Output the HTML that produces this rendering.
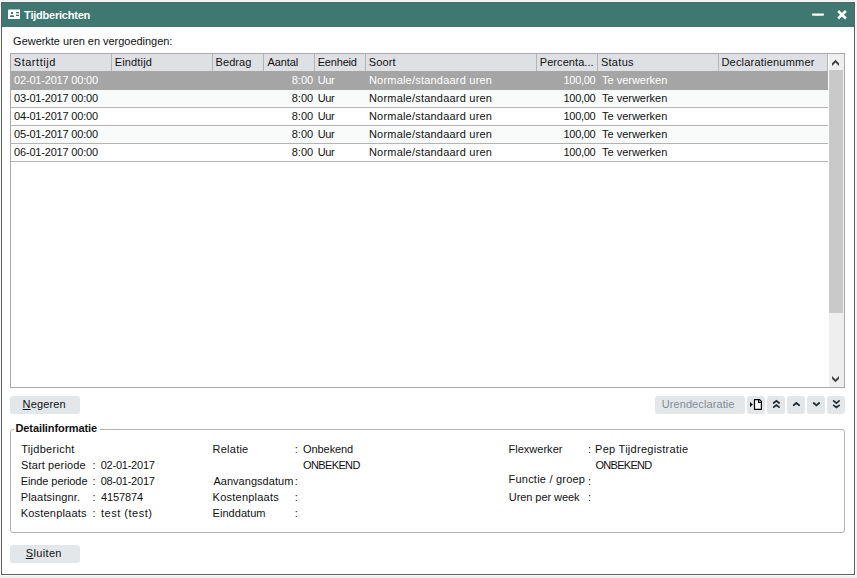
<!DOCTYPE html>
<html><head><meta charset="utf-8"><style>
html,body{margin:0;padding:0;}
body{width:857px;height:578px;background:#eef1f2;position:relative;overflow:hidden;font-family:"Liberation Sans", sans-serif;font-size:11px;color:#111;}
.r{position:absolute;}
.t{position:absolute;line-height:13px;white-space:nowrap;}
</style></head><body>
<div class="r" style="left:0px;top:1px;width:856px;height:575px;background:#f8fbfb;"></div>
<div class="r" style="left:1px;top:2px;width:854px;height:573px;background:#ffffff;box-sizing:border-box;border:1px solid #5e5e5e;"></div>
<div class="r" style="left:2px;top:3px;width:852px;height:24px;background:#3e7870;"></div>
<svg class="r" style="left:8px;top:9px" width="12" height="10" viewBox="0 0 12 10">
<path d="M0.6 0.6H12V10H0V1.2Z" fill="#fff"/>
<rect x="3" y="3" width="2" height="2" fill="#3e7870"/>
<path d="M2 8V6.9Q2 6.2 3 6.2H5Q6 6.2 6 6.9V8Z" fill="#3e7870"/>
<rect x="8" y="3" width="3" height="1" fill="#3e7870"/>
<rect x="8" y="6" width="3" height="1" fill="#3e7870"/>
<rect x="8" y="4" width="3" height="2" fill="#c5d7d4"/>
</svg>
<svg class="r" style="left:810px;top:10px" width="16" height="10" viewBox="0 0 16 10"><path d="M3 4.6H13" stroke="#fff" stroke-width="2.2" stroke-linecap="round"/></svg>
<svg class="r" style="left:837px;top:10px" width="10" height="10" viewBox="0 0 10 10">
<path d="M1.1 1L8.9 8.5M8.9 1L1.1 8.5" stroke="#fff" stroke-width="2.5" stroke-linecap="butt"/>
</svg>
<div class="r" style="left:10px;top:53px;width:835px;height:335px;background:#fff;box-sizing:border-box;border:1px solid #a9a9a9;"></div>
<div class="r" style="left:11px;top:54px;width:816px;height:17px;background:#dfe0e4;"></div>
<div class="r" style="left:111px;top:54px;width:1px;height:17px;background:#b3b4b7;"></div>
<div class="r" style="left:212px;top:54px;width:1px;height:17px;background:#b3b4b7;"></div>
<div class="r" style="left:263px;top:54px;width:1px;height:17px;background:#b3b4b7;"></div>
<div class="r" style="left:314px;top:54px;width:1px;height:17px;background:#b3b4b7;"></div>
<div class="r" style="left:365px;top:54px;width:1px;height:17px;background:#b3b4b7;"></div>
<div class="r" style="left:536px;top:54px;width:1px;height:17px;background:#b3b4b7;"></div>
<div class="r" style="left:597px;top:54px;width:1px;height:17px;background:#b3b4b7;"></div>
<div class="r" style="left:718px;top:54px;width:1px;height:17px;background:#b3b4b7;"></div>
<div class="r" style="left:827px;top:54px;width:1px;height:17px;background:#b3b4b7;"></div>
<div class="r" style="left:11px;top:71px;width:817px;height:19px;background:#a5a5a5;"></div>
<div class="r" style="left:11px;top:90px;width:817px;height:17px;background:#f9fbfb;"></div>
<div class="r" style="left:11px;top:107px;width:817px;height:1px;background:#b4b4b4;"></div>
<div class="r" style="left:11px;top:108px;width:817px;height:17px;background:#ffffff;"></div>
<div class="r" style="left:11px;top:125px;width:817px;height:1px;background:#b4b4b4;"></div>
<div class="r" style="left:11px;top:126px;width:817px;height:17px;background:#f9fbfb;"></div>
<div class="r" style="left:11px;top:143px;width:817px;height:1px;background:#b4b4b4;"></div>
<div class="r" style="left:11px;top:144px;width:817px;height:17px;background:#ffffff;"></div>
<div class="r" style="left:11px;top:161px;width:817px;height:1px;background:#b4b4b4;"></div>
<div class="r" style="left:829px;top:54px;width:15px;height:333px;background:#efefef;"></div>
<div class="r" style="left:829px;top:70px;width:14px;height:243px;background:#c9c9c9;"></div>
<svg class="r" style="left:829px;top:56px" width="14" height="14" viewBox="0 0 14 14">
<path d="M3 7.3L6.5 3.8L10 7.3V10L6.5 6.5L3 10Z" fill="#404040"/>
</svg>
<svg class="r" style="left:829px;top:371px" width="14" height="14" viewBox="0 0 14 14">
<path d="M3 5L6.5 8.5L10 5V7.7L6.5 11.2L3 7.7Z" fill="#404040"/>
</svg>
<div class="r" style="left:10px;top:396px;width:70px;height:18px;background:#e3e7ea;border-radius:3px;"></div>
<div class="r" style="left:655px;top:396px;width:90px;height:18px;background:#e3e7ea;border-radius:3px;"></div>
<div class="r" style="left:747px;top:396px;width:18px;height:18px;background:#e3e7ea;border-radius:3px;"></div>
<div class="r" style="left:767px;top:396px;width:18px;height:18px;background:#e3e7ea;border-radius:3px;"></div>
<div class="r" style="left:787px;top:396px;width:18px;height:18px;background:#e3e7ea;border-radius:3px;"></div>
<div class="r" style="left:807px;top:396px;width:18px;height:18px;background:#e3e7ea;border-radius:3px;"></div>
<div class="r" style="left:827px;top:396px;width:18px;height:18px;background:#e3e7ea;border-radius:3px;"></div>
<svg class="r" style="left:747px;top:396px" width="18" height="18" viewBox="0 0 18 18">
<path d="M3 6L5.9 8.5L3 11Z" fill="#000"/>
<path d="M7.5 3.6H12.6L14.4 5.4V13.4H7.5Z" fill="#fff" stroke="#000" stroke-width="1.2" stroke-linejoin="round"/>
<path d="M11.6 3.6V6.4H14.4" fill="none" stroke="#000" stroke-width="1.2"/>
</svg>
<svg class="r" style="left:767px;top:396px" width="18" height="18" viewBox="0 0 18 18">
<path d="M6.7 7L9.4 4.8L12.1 7M6.7 11.2L9.4 9L12.1 11.2" stroke="#1f2a30" stroke-width="1.7" stroke-linecap="round" fill="none"/>
</svg>
<svg class="r" style="left:787px;top:396px" width="18" height="18" viewBox="0 0 18 18">
<path d="M6.7 9.2L9.4 6.9L12.1 9.2" stroke="#1f2a30" stroke-width="1.8" stroke-linecap="round" fill="none"/>
</svg>
<svg class="r" style="left:807px;top:396px" width="18" height="18" viewBox="0 0 18 18">
<path d="M6.7 7L9.4 9.4L12.1 7" stroke="#1f2a30" stroke-width="1.8" stroke-linecap="round" fill="none"/>
</svg>
<svg class="r" style="left:827px;top:396px" width="18" height="18" viewBox="0 0 18 18">
<path d="M6.7 4.9L9.4 7.1L12.1 4.9M6.7 9.3L9.4 11.5L12.1 9.3" stroke="#1f2a30" stroke-width="1.7" stroke-linecap="round" fill="none"/>
</svg>
<div class="r" style="left:10px;top:429px;width:835px;height:104px;background:transparent;box-sizing:border-box;border:1px solid #b2b2b2;border-radius:3px;"></div>
<div class="r" style="left:14px;top:426px;width:86px;height:7px;background:#fff;"></div>
<div class="r" style="left:10px;top:545px;width:70px;height:18px;background:#e3e7ea;border-radius:3px;"></div>
<div class="t" style="left:24.08px;top:9px;letter-spacing:-0.223px;font-weight:bold;color:#fff;">Tijdberichten</div>
<div class="t" style="left:13.12px;top:35px;letter-spacing:-0.032px;">Gewerkte uren en vergoedingen:</div>
<div class="t" style="left:13.78px;top:56px;letter-spacing:0.531px;">Starttijd</div>
<div class="t" style="left:114.72px;top:56px;letter-spacing:0.154px;">Eindtijd</div>
<div class="t" style="left:215.62px;top:56px;letter-spacing:0.035px;">Bedrag</div>
<div class="t" style="left:267.38px;top:56px;letter-spacing:-0.065px;">Aantal</div>
<div class="t" style="left:317.73px;top:56px;letter-spacing:-0.191px;">Eenheid</div>
<div class="t" style="left:368.68px;top:56px;letter-spacing:0.149px;">Soort</div>
<div class="t" style="left:539.72px;top:56px;letter-spacing:0.075px;">Percenta...</div>
<div class="t" style="left:600.88px;top:56px;letter-spacing:0.3px;">Status</div>
<div class="t" style="left:721.42px;top:56px;letter-spacing:0.211px;">Declaratienummer</div>
<div class="t" style="left:14.12px;top:74px;letter-spacing:-0.195px;color:#fff;">02-01-2017 00:00</div>
<div class="t" style="left:291.73px;top:74px;letter-spacing:0.025px;color:#fff;">8:00</div>
<div class="t" style="left:317.68px;top:74px;letter-spacing:-0.337px;color:#fff;">Uur</div>
<div class="t" style="left:368.92px;top:74px;letter-spacing:0.211px;color:#fff;">Normale/standaard uren</div>
<div class="t" style="left:563.52px;top:74px;letter-spacing:-0.295px;color:#fff;">100,00</div>
<div class="t" style="left:602.02px;top:74px;letter-spacing:-0.014px;color:#fff;">Te verwerken</div>
<div class="t" style="left:14.12px;top:92px;letter-spacing:-0.195px;">03-01-2017 00:00</div>
<div class="t" style="left:291.73px;top:92px;letter-spacing:0.025px;">8:00</div>
<div class="t" style="left:317.68px;top:92px;letter-spacing:-0.337px;">Uur</div>
<div class="t" style="left:368.92px;top:92px;letter-spacing:0.211px;">Normale/standaard uren</div>
<div class="t" style="left:563.52px;top:92px;letter-spacing:-0.295px;">100,00</div>
<div class="t" style="left:602.02px;top:92px;letter-spacing:-0.014px;">Te verwerken</div>
<div class="t" style="left:14.12px;top:110px;letter-spacing:-0.195px;">04-01-2017 00:00</div>
<div class="t" style="left:291.73px;top:110px;letter-spacing:0.025px;">8:00</div>
<div class="t" style="left:317.68px;top:110px;letter-spacing:-0.337px;">Uur</div>
<div class="t" style="left:368.92px;top:110px;letter-spacing:0.211px;">Normale/standaard uren</div>
<div class="t" style="left:563.52px;top:110px;letter-spacing:-0.295px;">100,00</div>
<div class="t" style="left:602.02px;top:110px;letter-spacing:-0.014px;">Te verwerken</div>
<div class="t" style="left:14.12px;top:128px;letter-spacing:-0.195px;">05-01-2017 00:00</div>
<div class="t" style="left:291.73px;top:128px;letter-spacing:0.025px;">8:00</div>
<div class="t" style="left:317.68px;top:128px;letter-spacing:-0.337px;">Uur</div>
<div class="t" style="left:368.92px;top:128px;letter-spacing:0.211px;">Normale/standaard uren</div>
<div class="t" style="left:563.52px;top:128px;letter-spacing:-0.295px;">100,00</div>
<div class="t" style="left:602.02px;top:128px;letter-spacing:-0.014px;">Te verwerken</div>
<div class="t" style="left:14.12px;top:146px;letter-spacing:-0.195px;">06-01-2017 00:00</div>
<div class="t" style="left:291.73px;top:146px;letter-spacing:0.025px;">8:00</div>
<div class="t" style="left:317.68px;top:146px;letter-spacing:-0.337px;">Uur</div>
<div class="t" style="left:368.92px;top:146px;letter-spacing:0.211px;">Normale/standaard uren</div>
<div class="t" style="left:563.52px;top:146px;letter-spacing:-0.295px;">100,00</div>
<div class="t" style="left:602.02px;top:146px;letter-spacing:-0.014px;">Te verwerken</div>
<div class="t" style="left:22.62px;top:398px;letter-spacing:0.129px;"><u>N</u>egeren</div>
<div class="t" style="left:661.68px;top:398px;letter-spacing:0.094px;color:#848b92;">Urendeclaratie</div>
<div class="t" style="left:15.48px;top:422px;letter-spacing:-0.095px;font-weight:bold;">Detailinformatie</div>
<div class="t" style="left:21.22px;top:443px;letter-spacing:0.285px;">Tijdbericht</div>
<div class="t" style="left:20.98px;top:459px;letter-spacing:0.14px;">Start periode</div>
<div class="t" style="left:92.42px;top:459px;letter-spacing:0.15px;">:</div>
<div class="t" style="left:20.72px;top:475px;letter-spacing:-0.092px;">Einde periode</div>
<div class="t" style="left:92.42px;top:475px;letter-spacing:0.15px;">:</div>
<div class="t" style="left:20.72px;top:491px;letter-spacing:0.166px;">Plaatsingnr.</div>
<div class="t" style="left:92.42px;top:491px;letter-spacing:0.15px;">:</div>
<div class="t" style="left:20.72px;top:507px;letter-spacing:0.198px;">Kostenplaats</div>
<div class="t" style="left:92.42px;top:507px;letter-spacing:0.15px;">:</div>
<div class="t" style="left:100.72px;top:459px;letter-spacing:-0.233px;">02-01-2017</div>
<div class="t" style="left:100.72px;top:475px;letter-spacing:-0.233px;">08-01-2017</div>
<div class="t" style="left:100.98px;top:491px;letter-spacing:-0.125px;">4157874</div>
<div class="t" style="left:100.98px;top:507px;letter-spacing:0.508px;">test (test)</div>
<div class="t" style="left:212.62px;top:443px;letter-spacing:0.225px;">Relatie</div>
<div class="t" style="left:294.73px;top:443px;letter-spacing:0.45px;">:</div>
<div class="t" style="left:213.38px;top:475px;letter-spacing:0.038px;">Aanvangsdatum</div>
<div class="t" style="left:294.73px;top:475px;letter-spacing:0.45px;">:</div>
<div class="t" style="left:212.62px;top:491px;letter-spacing:0.229px;">Kostenplaats</div>
<div class="t" style="left:294.73px;top:491px;letter-spacing:0.45px;">:</div>
<div class="t" style="left:212.62px;top:507px;letter-spacing:0.031px;">Einddatum</div>
<div class="t" style="left:294.73px;top:507px;letter-spacing:0.45px;">:</div>
<div class="t" style="left:303.12px;top:443px;letter-spacing:-0.096px;">Onbekend</div>
<div class="t" style="left:303.12px;top:459px;letter-spacing:-0.643px;">ONBEKEND</div>
<div class="t" style="left:508.52px;top:443px;letter-spacing:0.014px;">Flexwerker</div>
<div class="t" style="left:508.52px;top:473px;letter-spacing:0.22px;">Functie / groep</div>
<div class="t" style="left:508.78px;top:491px;letter-spacing:-0.06px;">Uren per week</div>
<div class="t" style="left:588.02px;top:443px;letter-spacing:1.35px;">:</div>
<div class="t" style="left:588.02px;top:475px;letter-spacing:1.35px;">:</div>
<div class="t" style="left:588.02px;top:491px;letter-spacing:1.35px;">:</div>
<div class="t" style="left:595.02px;top:443px;letter-spacing:0.278px;">Pep Tijdregistratie</div>
<div class="t" style="left:595.52px;top:459px;letter-spacing:-0.714px;">ONBEKEND</div>
<div class="t" style="left:25.68px;top:547px;letter-spacing:0.363px;"><u>S</u>luiten</div>
</body></html>
